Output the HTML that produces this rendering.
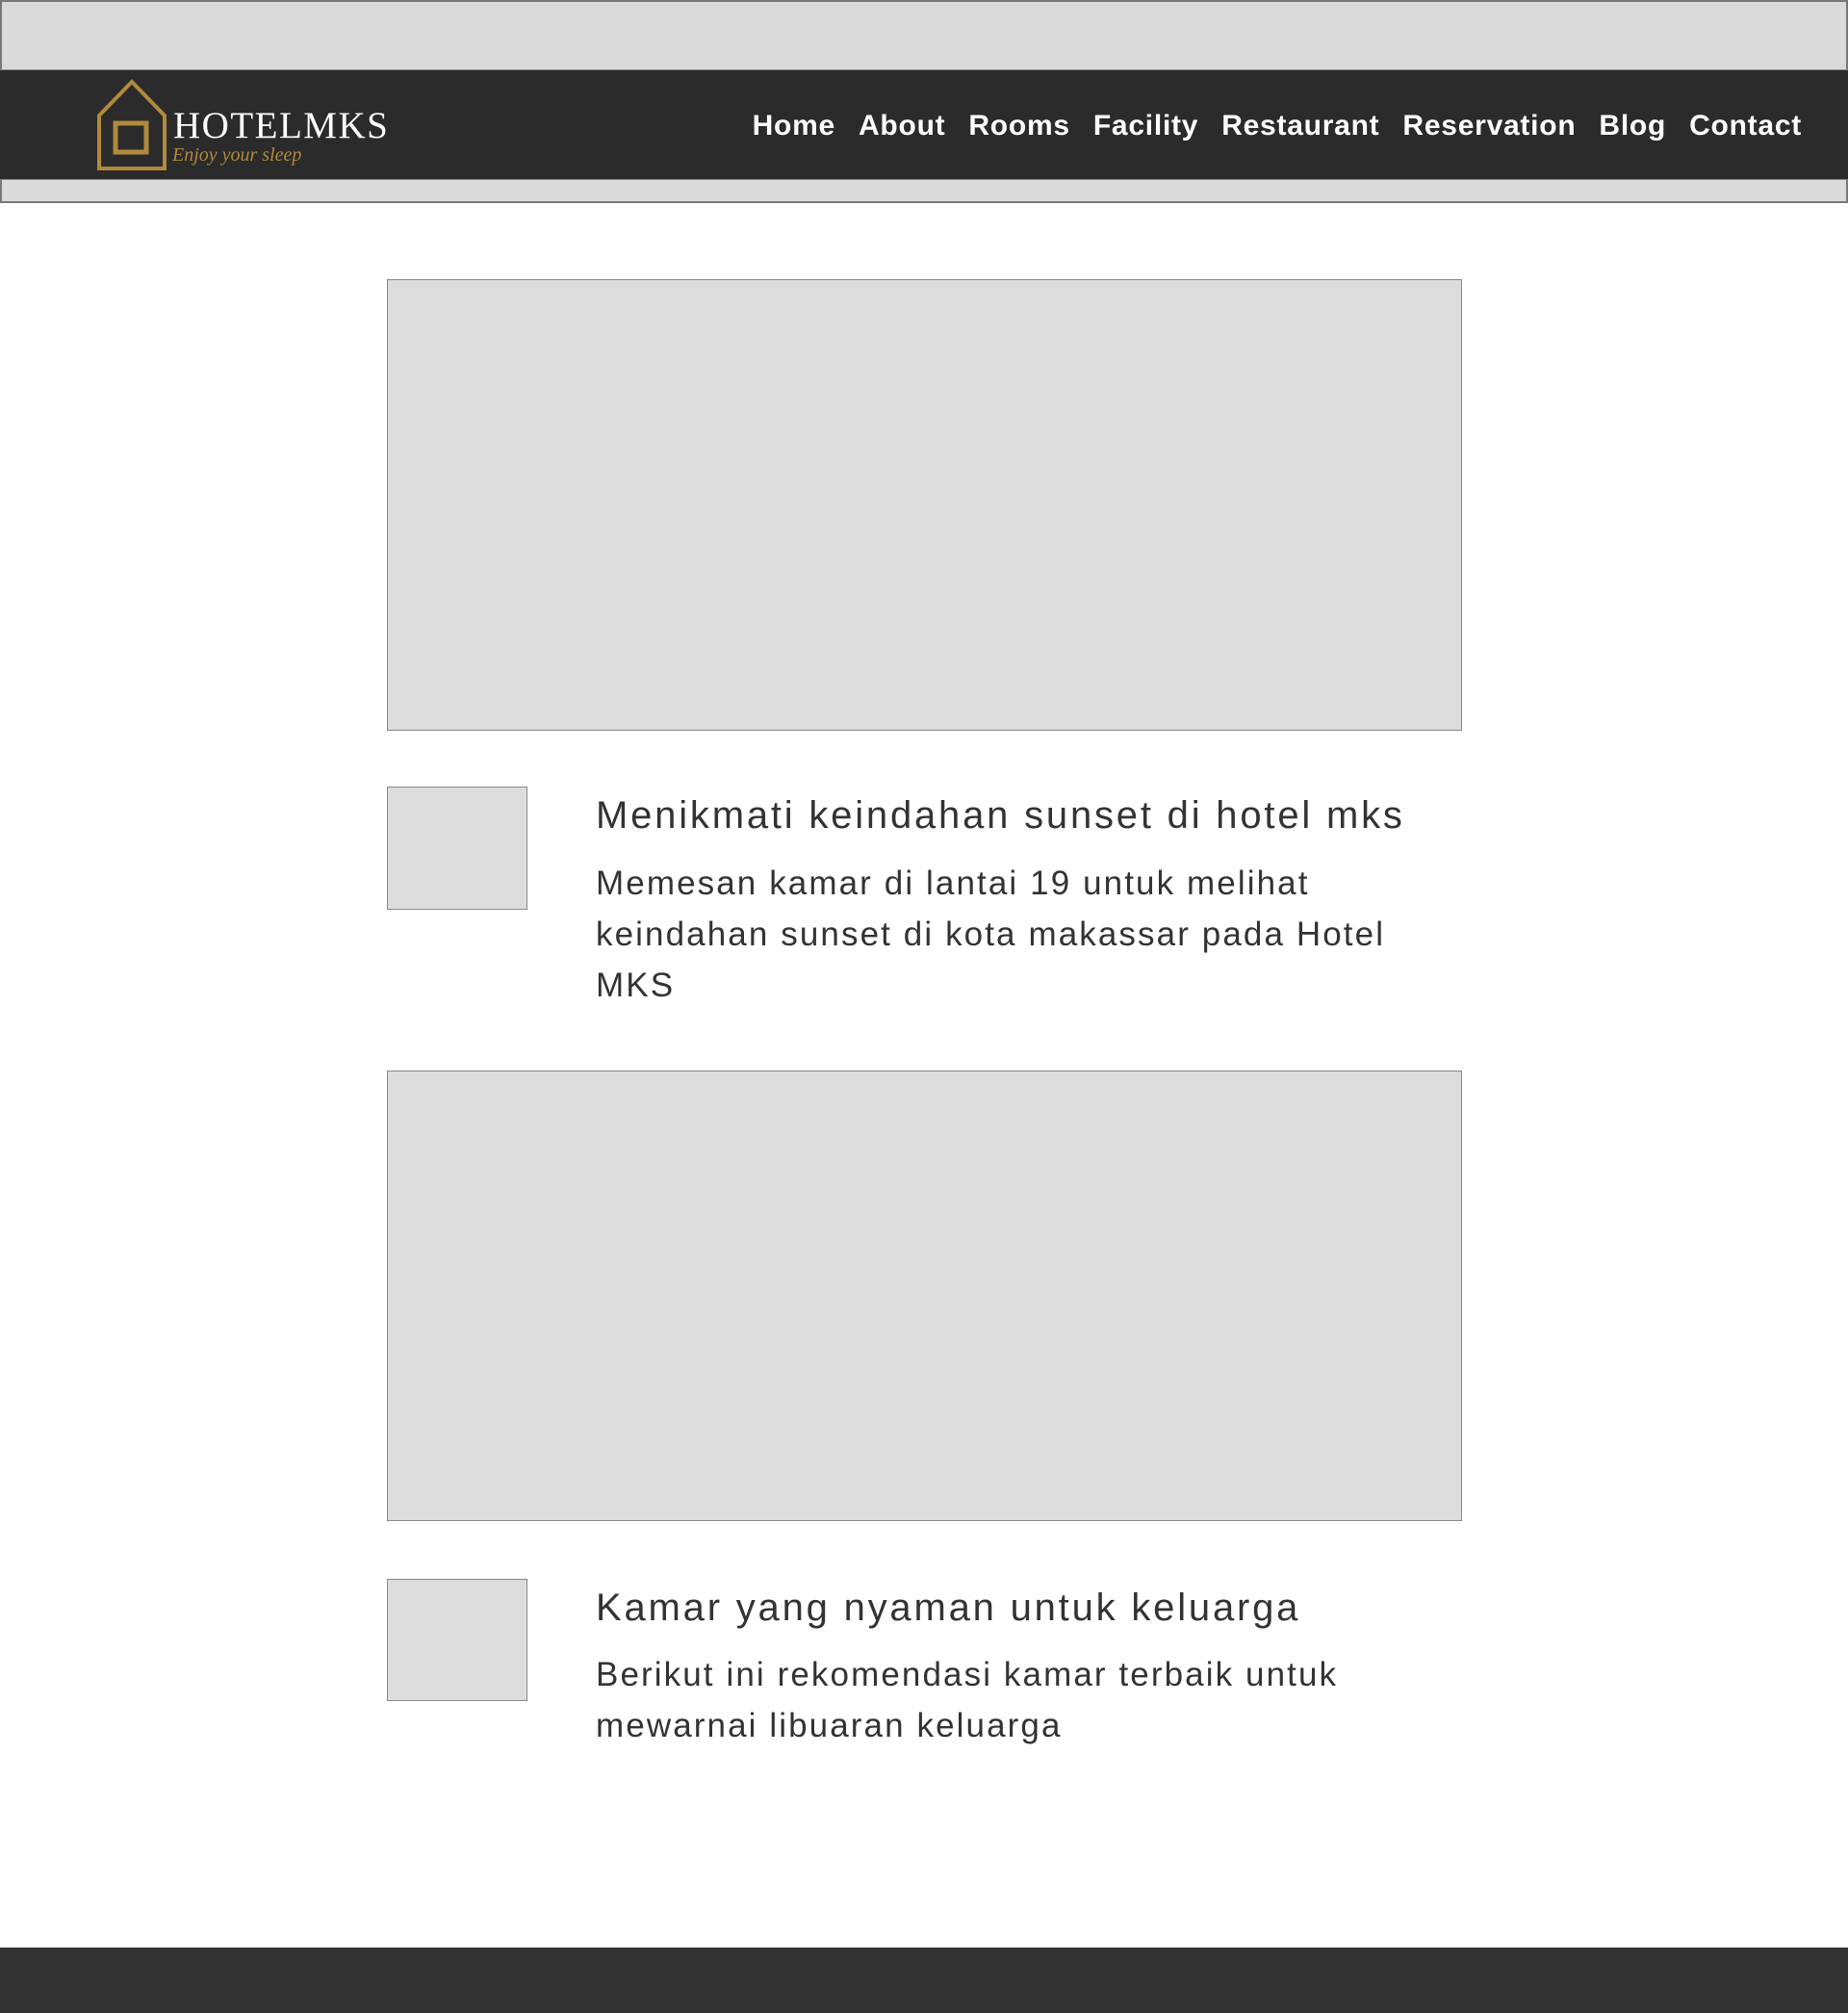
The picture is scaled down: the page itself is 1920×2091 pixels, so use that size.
<!DOCTYPE html>
<html><head><meta charset="utf-8"><style>
*{margin:0;padding:0;box-sizing:border-box}
body{width:1920px;height:2091px;background:#fff;position:relative;font-family:"Liberation Sans",sans-serif;color:#333;overflow:hidden}
.top{position:absolute;left:0;top:0;width:1920px;height:211px;background:#dadada;border:2px solid #777}
.bar{position:absolute;left:0;top:72px;width:1920px;height:115px;background:#2b2b2b;border-top:1px solid #888;border-bottom:1px solid #888}
.nav{position:absolute;right:48px;top:114px;display:flex;gap:24px;color:#fff;font-size:30px;font-weight:bold;letter-spacing:0.75px}
.brand{position:absolute;left:180px;top:108px;color:#fff;font-family:"Liberation Serif",serif;font-size:39px;letter-spacing:1.5px}
.tag{position:absolute;left:179px;top:150px;color:#b08a3e;font-family:"Liberation Serif",serif;font-style:italic;font-size:20px}
.box{position:absolute;background:#dcdcdc;border:1px solid #888}
h2{position:absolute;left:619px;font-weight:normal;font-size:40px;color:#333;letter-spacing:2.8px}
p{position:absolute;left:619px;font-size:35px;line-height:53px;color:#333;width:1000px;letter-spacing:2.1px}
.foot{position:absolute;left:0;top:2023px;width:1920px;height:68px;background:#333}
</style></head><body>
<div class="top"></div>
<div class="bar"></div>
<svg style="position:absolute;left:100px;top:82px" width="74" height="96" viewBox="0 0 74 96"><path d="M3 93V38L37 3L71 38V93Z" fill="none" stroke="#b08a3e" stroke-width="4"/><rect x="20" y="46" width="32" height="30" fill="none" stroke="#b08a3e" stroke-width="5"/></svg>
<div class="brand">HOTELMKS</div>
<div class="tag">Enjoy your sleep</div>
<div class="nav"><span>Home</span><span>About</span><span>Rooms</span><span>Facility</span><span>Restaurant</span><span>Reservation</span><span>Blog</span><span>Contact</span></div>
<div class="box" style="left:402px;top:290px;width:1117px;height:469px"></div>
<div class="box" style="left:402px;top:817px;width:146px;height:128px"></div>
<h2 style="top:825px">Menikmati keindahan sunset di hotel mks</h2>
<p style="top:891px">Memesan kamar di lantai 19 untuk melihat<br>keindahan sunset di kota makassar pada Hotel<br>MKS</p>
<div class="box" style="left:402px;top:1112px;width:1117px;height:468px"></div>
<div class="box" style="left:402px;top:1640px;width:146px;height:127px"></div>
<h2 style="top:1648px">Kamar yang nyaman untuk keluarga</h2>
<p style="top:1713px">Berikut ini rekomendasi kamar terbaik untuk<br>mewarnai libuaran keluarga</p>
<div class="foot"></div>
</body></html>
